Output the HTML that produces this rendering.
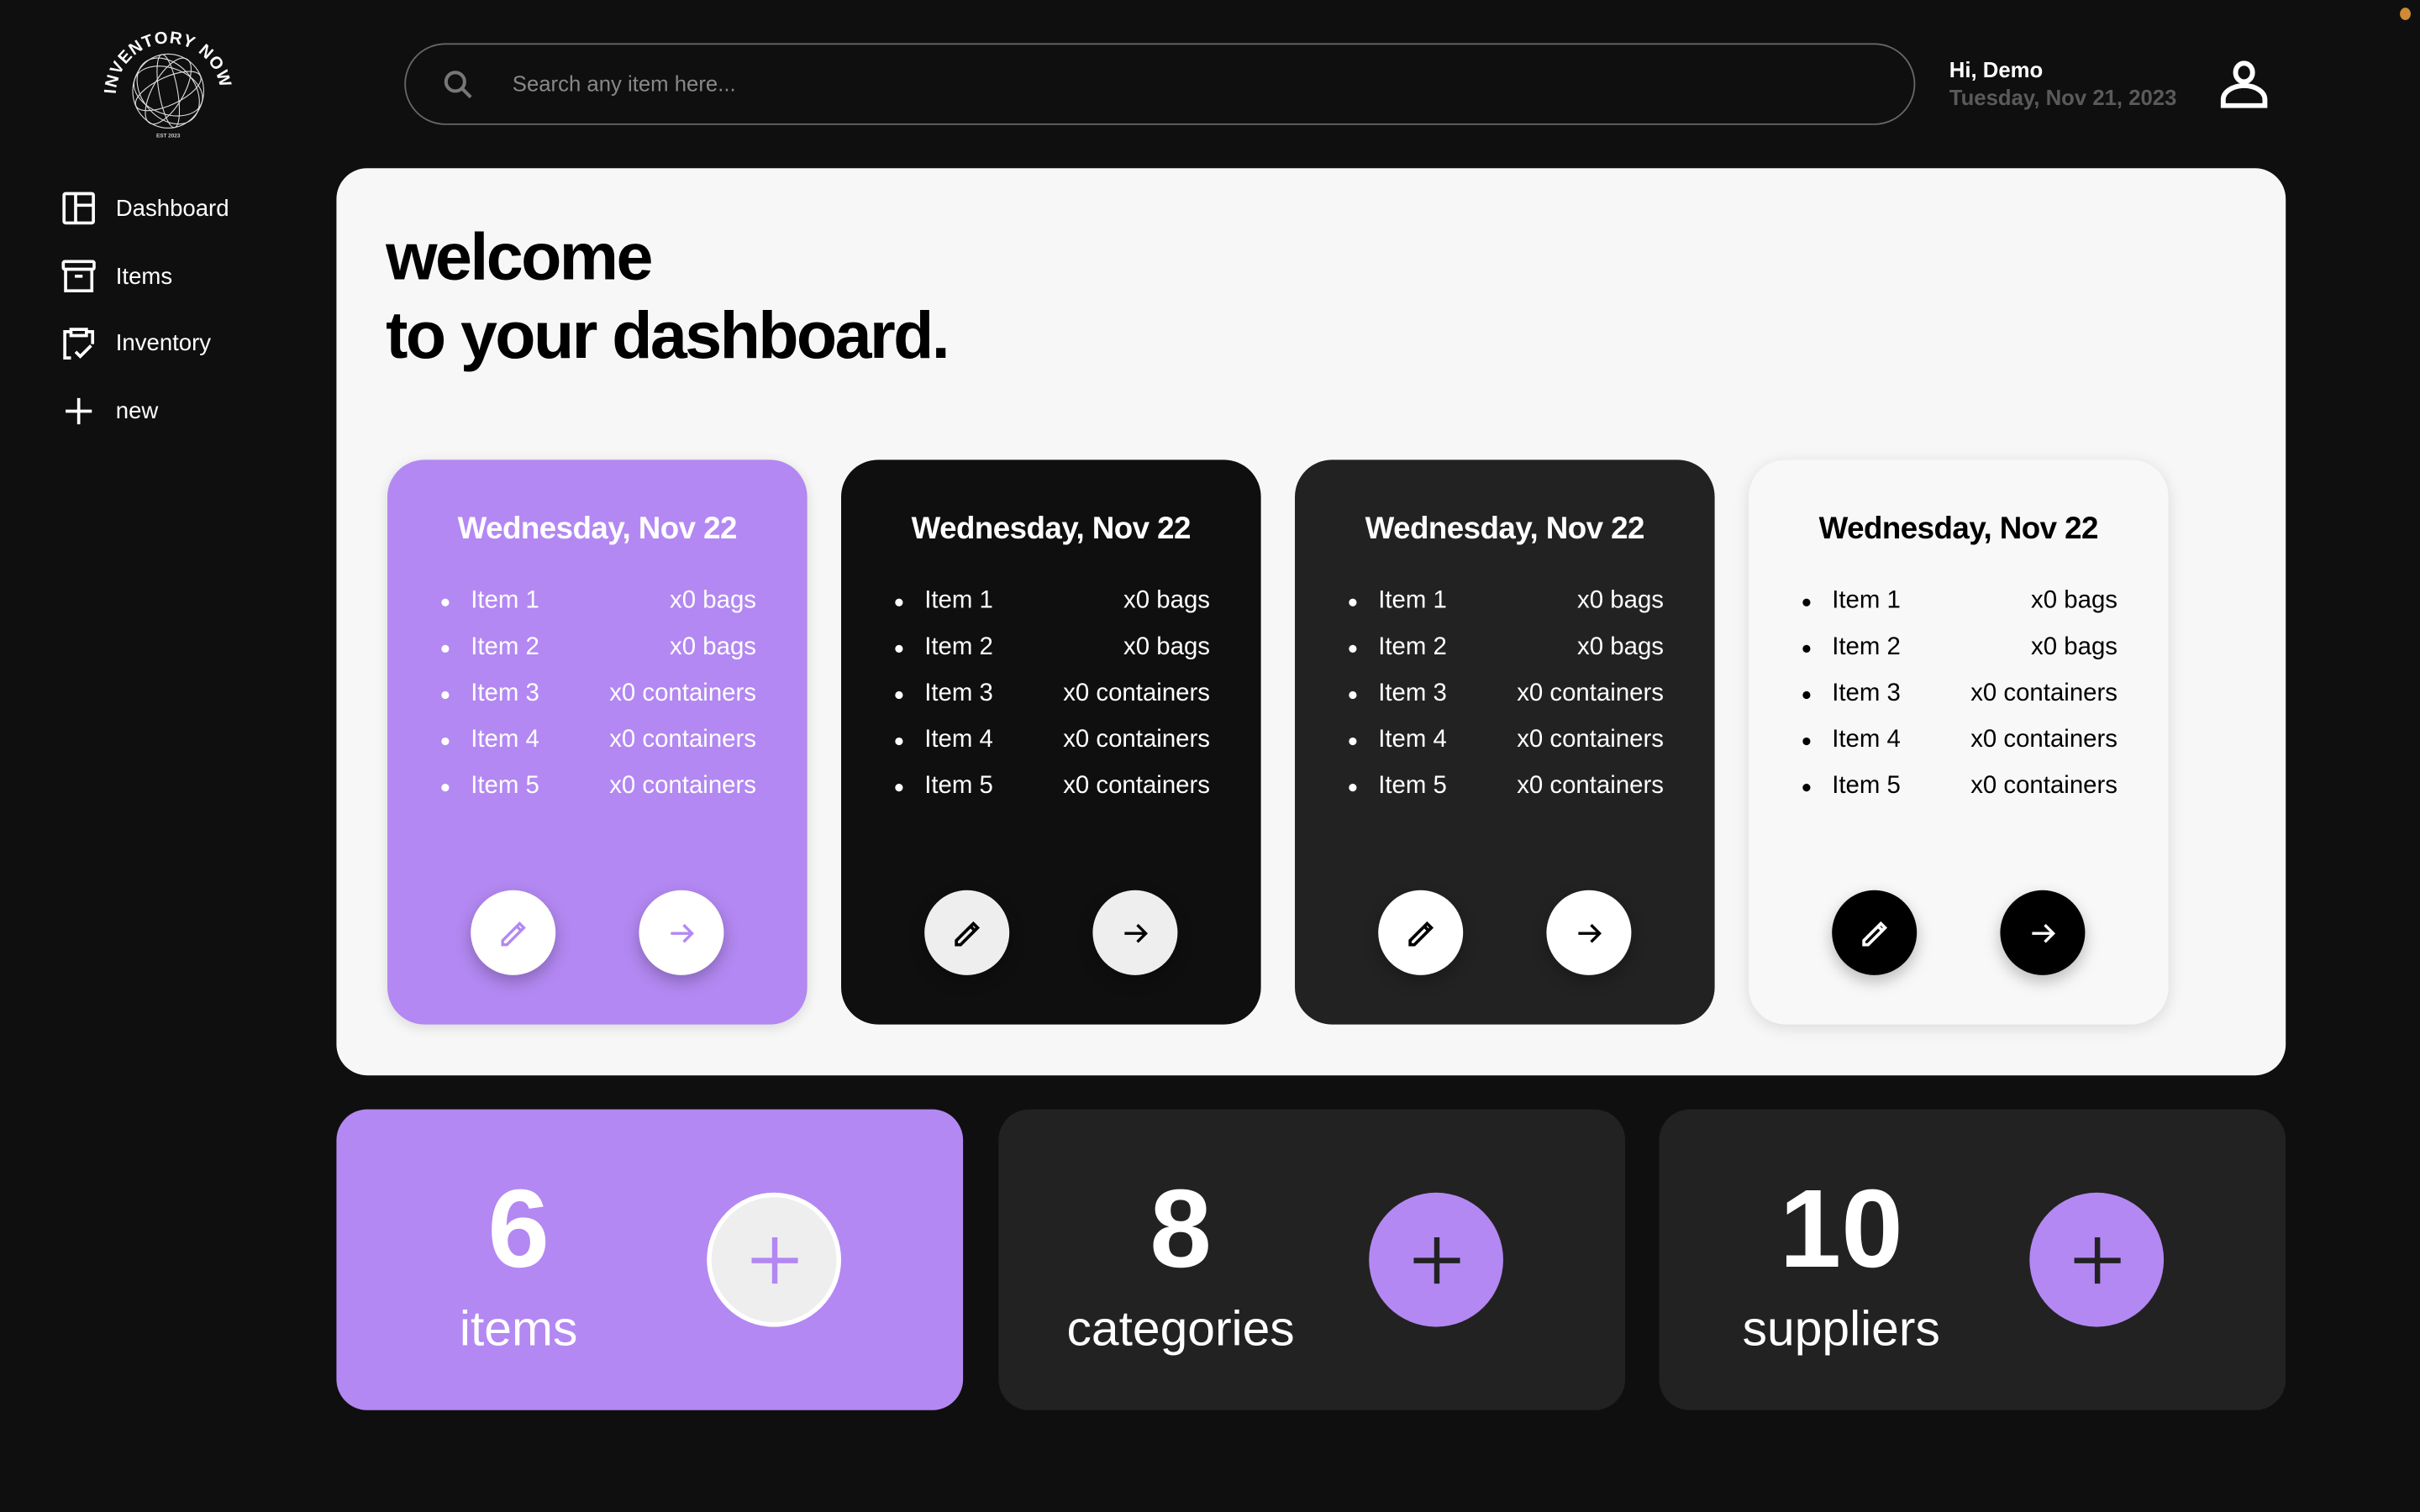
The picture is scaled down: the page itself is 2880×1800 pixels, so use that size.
<!DOCTYPE html>
<html><head><meta charset="utf-8"><style>
html,body{margin:0;padding:0;background:#0f0f0f;overflow:hidden}
#w{position:absolute;left:0;top:0;width:1568px;height:980px;transform:scale(1.836735);transform-origin:0 0;font-family:"Liberation Sans",sans-serif;color:#fff}
.a{position:absolute}
.nav{position:absolute;left:40px;font-size:15px;display:flex;align-items:center}
.nav svg{width:22px;height:22px;margin-right:13px}
.panel{left:218px;top:109px;width:1263px;height:588px;background:#f7f7f7;border-radius:20px}
h1{position:absolute;left:250px;top:142px;margin:0;font-size:43px;line-height:51px;color:#000;font-weight:bold;letter-spacing:-1.4px}
.card{position:absolute;top:298px;width:272px;height:366px;border-radius:24px}
.card .t{position:absolute;left:0;width:100%;text-align:center;font-size:20px;font-weight:bold;top:34px;letter-spacing:-0.3px}
.card ul{position:absolute;left:35px;top:80px;width:204px;margin:0;padding:0;list-style:none}
.card li{height:30px;font-size:16px;display:flex;justify-content:space-between;position:relative;padding-left:19px;line-height:24px}
.card li:before{content:"";position:absolute;left:0;top:10px;width:5px;height:5px;border-radius:50%;background:currentColor}
.b{position:absolute;top:279px;width:55px;height:55px;border-radius:50%;display:flex;align-items:center;justify-content:center;box-shadow:0 4px 10px rgba(0,0,0,.25)}
.b svg{width:22px;height:22px}
.stat{position:absolute;top:719px;width:406px;height:195px;border-radius:20px}
.num{position:absolute;left:0;width:236px;text-align:center;top:38px;font-size:72px;font-weight:bold;line-height:80px}
.lbl{position:absolute;left:0;width:236px;text-align:center;top:122px;font-size:32px;line-height:40px}
.plus{position:absolute;left:240px;top:54px;width:87px;height:87px;border-radius:50%;display:flex;align-items:center;justify-content:center;box-sizing:border-box}
</style></head><body><div id="w">
<!-- logo -->
<svg class="a" style="left:66px;top:14px" width="86" height="80" viewBox="0 0 86 80">
<defs><path id="arc" d="M9,48 A34,34 0 0 1 77,48"/></defs>
<text font-family="Liberation Sans" font-weight="bold" font-size="11" fill="#fff" letter-spacing="0.6"><textPath href="#arc" startOffset="1">INVENTORY NOW</textPath></text>
<g fill="none" stroke="#ddd" stroke-width="0.6">
<ellipse cx="43" cy="45" rx="23" ry="24"/><ellipse cx="43" cy="45" rx="10" ry="24" transform="rotate(30 43 45)"/><ellipse cx="43" cy="45" rx="23" ry="9" transform="rotate(-25 43 45)"/><ellipse cx="43" cy="45" rx="17" ry="24" transform="rotate(-40 43 45)"/><ellipse cx="43" cy="45" rx="23" ry="15" transform="rotate(20 43 45)"/><ellipse cx="43" cy="45" rx="6" ry="24" transform="rotate(-10 43 45)"/></g>
<text x="43" y="75" font-size="3.5" fill="#ccc" text-anchor="middle" font-weight="bold">EST 2023</text>
</svg>
<div class="nav" style="top:124px"><svg viewBox="0 0 22 22" fill="none" stroke="#fff" stroke-width="2"><rect x="1.5" y="1.5" width="19" height="19" rx="1"/><path d="M9 1.5v19M9 9h11.5"/></svg>Dashboard</div>
<div class="nav" style="top:168px"><svg viewBox="0 0 22 22" fill="none" stroke="#fff" stroke-width="2"><rect x="1" y="1.5" width="20" height="5" rx="1"/><path d="M2.5 6.5v14h17v-14M8.5 11h5"/></svg>Items</div>
<div class="nav" style="top:211px"><svg viewBox="0 0 22 22" fill="none" stroke="#fff" stroke-width="2"><path d="M5 4H2v17h4M17 4h3v8M6 2.5h10v4H6zM9 17l3 3 7-7"/></svg>Inventory</div>
<div class="nav" style="top:255px"><svg viewBox="0 0 22 22" fill="none" stroke="#fff" stroke-width="2"><path d="M11 3v17M2.5 11.5h17"/></svg>new</div>
<!-- search -->
<div class="a" style="left:262px;top:28px;width:977px;height:51px;border:1px solid #666;border-radius:27px"></div>
<svg class="a" style="left:286px;top:44px" width="22" height="22" viewBox="0 0 22 22" fill="none" stroke="#777" stroke-width="2.2"><circle cx="9" cy="9" r="6"/><path d="M13.5 13.5l5.5 5.5"/></svg>
<div class="a" style="left:332px;top:46px;font-size:14px;color:#888">Search any item here...</div>
<div class="a" style="left:1263px;top:37px;font-size:14px;font-weight:bold">Hi, Demo</div>
<div class="a" style="left:1263px;top:55px;font-size:14px;font-weight:bold;color:#5a5a5a">Tuesday, Nov 21, 2023</div>
<svg class="a" style="left:1438px;top:38px" width="32" height="32" viewBox="0 0 32 32" fill="none" stroke="#fff" stroke-width="3.2"><ellipse cx="16" cy="9" rx="5.5" ry="6"/><path d="M2.5 30.5v-4a13.5 9 0 0 1 27 0v4z"/></svg>
<div class="a" style="left:1555px;top:5px;width:7px;height:8px;border-radius:50%;background:#d08a35"></div>
<!-- panel -->
<div class="a panel"></div>
<h1>welcome<br>to your dashboard.</h1>

<div class="card" style="left:251px;background:#b388f2;color:#fff;box-shadow:0 2px 8px rgba(0,0,0,.12)">
<div class="t">Wednesday, Nov 22</div>
<ul><li><span>Item 1</span><span>x0 bags</span></li><li><span>Item 2</span><span>x0 bags</span></li><li><span>Item 3</span><span>x0 containers</span></li><li><span>Item 4</span><span>x0 containers</span></li><li><span>Item 5</span><span>x0 containers</span></li></ul>
<div class="b" style="left:54px;background:#fff"><svg viewBox="0 0 24 24" fill="none" stroke="#b388f2" stroke-width="2"><path d="M4 20v-3L16 5l3 3L7 20zM14 7l3 3"/></svg></div>
<div class="b" style="left:163px;background:#fff"><svg viewBox="0 0 24 24" fill="none" stroke="#b388f2" stroke-width="2"><path d="M4 12h15M13 6l6 6-6 6"/></svg></div>
</div>
<div class="card" style="left:545px;background:#0f0f0f;color:#fff">
<div class="t">Wednesday, Nov 22</div>
<ul><li><span>Item 1</span><span>x0 bags</span></li><li><span>Item 2</span><span>x0 bags</span></li><li><span>Item 3</span><span>x0 containers</span></li><li><span>Item 4</span><span>x0 containers</span></li><li><span>Item 5</span><span>x0 containers</span></li></ul>
<div class="b" style="left:54px;background:#eee"><svg viewBox="0 0 24 24" fill="none" stroke="#000" stroke-width="2.2"><path d="M4 20v-3L16 5l3 3L7 20zM14 7l3 3"/></svg></div>
<div class="b" style="left:163px;background:#eee"><svg viewBox="0 0 24 24" fill="none" stroke="#000" stroke-width="2"><path d="M4 12h15M13 6l6 6-6 6"/></svg></div>
</div>
<div class="card" style="left:839px;background:#222;color:#fff">
<div class="t">Wednesday, Nov 22</div>
<ul><li><span>Item 1</span><span>x0 bags</span></li><li><span>Item 2</span><span>x0 bags</span></li><li><span>Item 3</span><span>x0 containers</span></li><li><span>Item 4</span><span>x0 containers</span></li><li><span>Item 5</span><span>x0 containers</span></li></ul>
<div class="b" style="left:54px;background:#fff"><svg viewBox="0 0 24 24" fill="none" stroke="#000" stroke-width="2.2"><path d="M4 20v-3L16 5l3 3L7 20zM14 7l3 3"/></svg></div>
<div class="b" style="left:163px;background:#fff"><svg viewBox="0 0 24 24" fill="none" stroke="#000" stroke-width="2"><path d="M4 12h15M13 6l6 6-6 6"/></svg></div>
</div>
<div class="card" style="left:1133px;background:#f8f8f8;color:#000;box-shadow:0 2px 10px rgba(0,0,0,.12)">
<div class="t">Wednesday, Nov 22</div>
<ul><li><span>Item 1</span><span>x0 bags</span></li><li><span>Item 2</span><span>x0 bags</span></li><li><span>Item 3</span><span>x0 containers</span></li><li><span>Item 4</span><span>x0 containers</span></li><li><span>Item 5</span><span>x0 containers</span></li></ul>
<div class="b" style="left:54px;background:#000"><svg viewBox="0 0 24 24" fill="none" stroke="#fff" stroke-width="2.2"><path d="M4 20v-3L16 5l3 3L7 20zM14 7l3 3"/></svg></div>
<div class="b" style="left:163px;background:#000"><svg viewBox="0 0 24 24" fill="none" stroke="#fff" stroke-width="2"><path d="M4 12h15M13 6l6 6-6 6"/></svg></div>
</div>

<div class="stat" style="left:218px;background:#b388f2">
<div class="num">6</div><div class="lbl">items</div>
<div class="plus" style="background:#eee;border:3px solid #fff"><svg width="34" height="34" viewBox="0 0 34 34" stroke="#b388f2" stroke-width="3.5"><path d="M17 2v30M2 17h30"/></svg></div>
</div>
<div class="stat" style="left:647px;background:#222">
<div class="num">8</div><div class="lbl">categories</div>
<div class="plus" style="background:#b388f2"><svg width="34" height="34" viewBox="0 0 34 34" stroke="#222" stroke-width="3.5"><path d="M17 2v30M2 17h30"/></svg></div>
</div>
<div class="stat" style="left:1075px;background:#222">
<div class="num">10</div><div class="lbl">suppliers</div>
<div class="plus" style="background:#b388f2"><svg width="34" height="34" viewBox="0 0 34 34" stroke="#222" stroke-width="3.5"><path d="M17 2v30M2 17h30"/></svg></div>
</div>
</div></body></html>
